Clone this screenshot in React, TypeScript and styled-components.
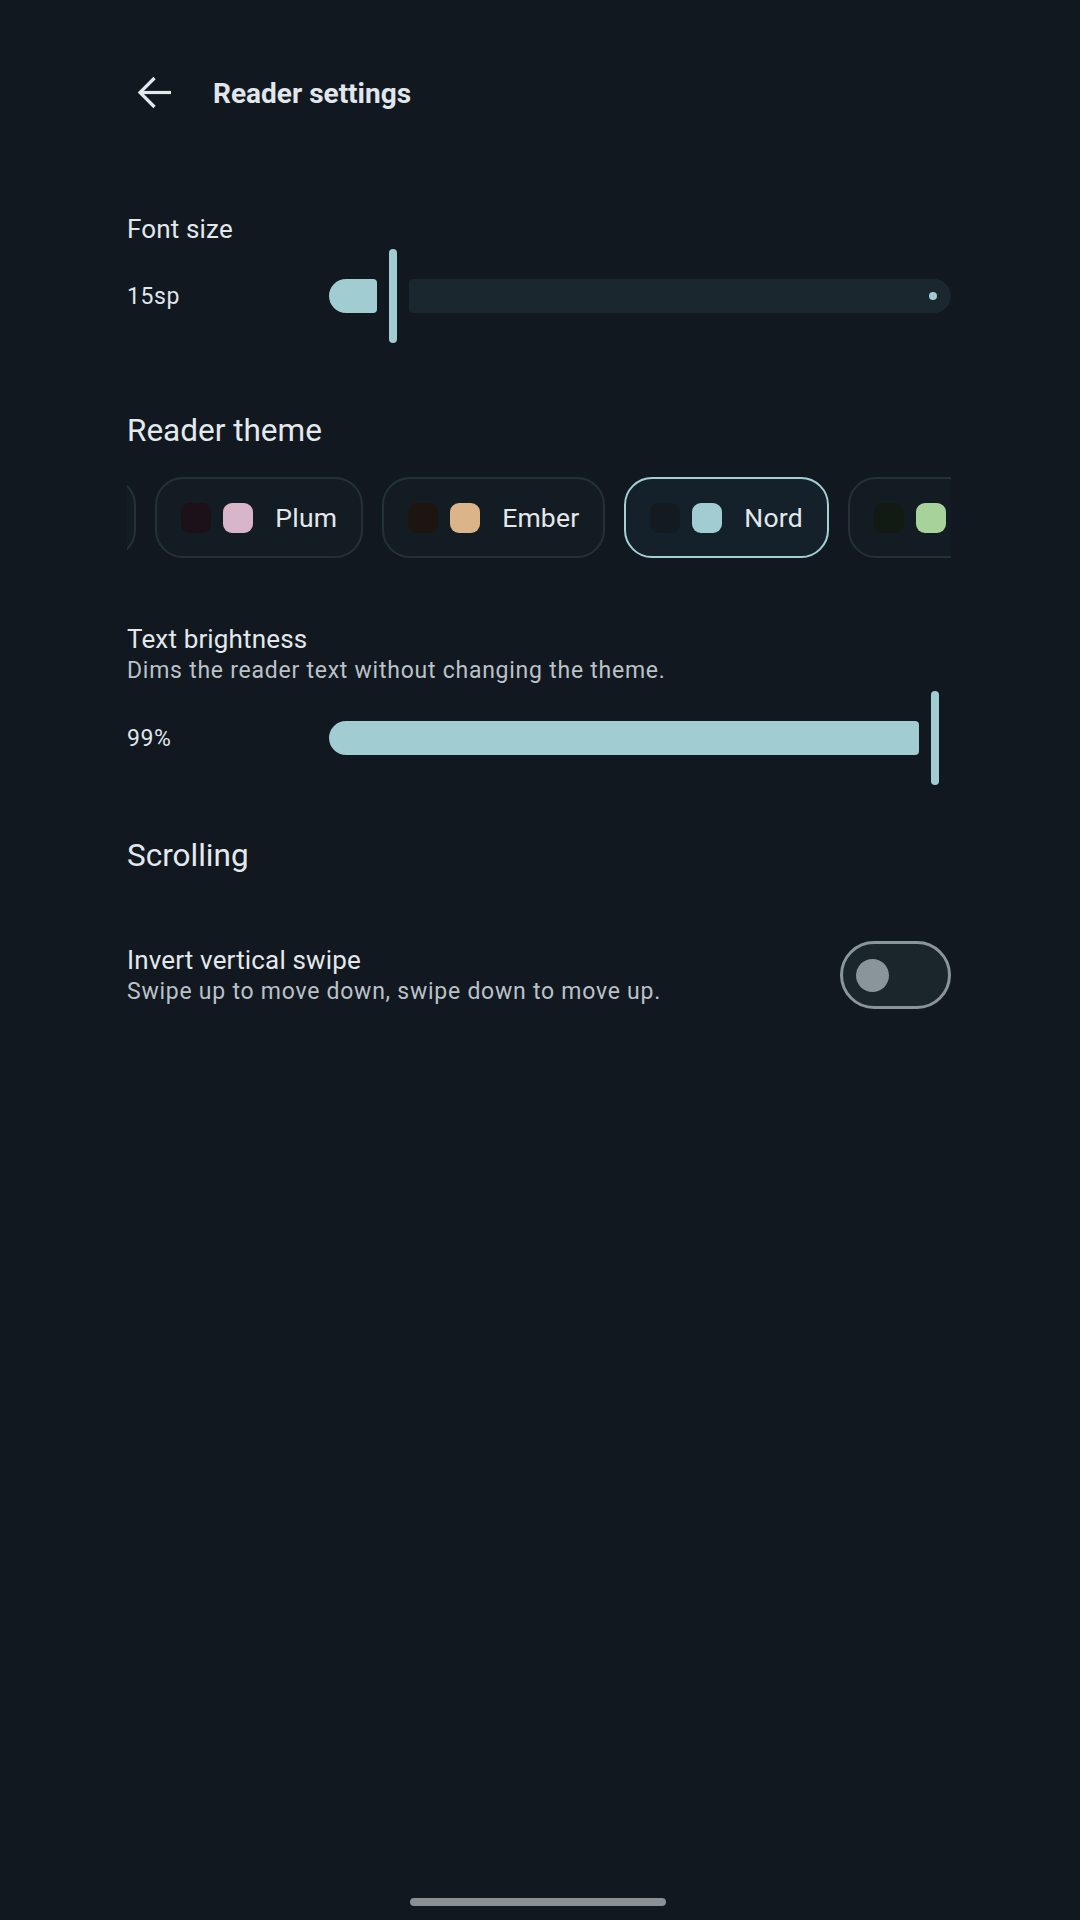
import { useLayoutEffect, useRef } from 'react'
import styled, { createGlobalStyle } from 'styled-components'

const GlobalStyle = createGlobalStyle`
  * {
    box-sizing: border-box;
  }

  html, body {
    margin: 0;
    padding: 0;
    background: #11181f;
  }

  body {
    font-family: Roboto, 'Noto Sans', sans-serif;
    color: #e1e6ea;
    -webkit-font-smoothing: antialiased;
  }
`

const Screen = styled.div`
  min-height: 1920px;
  display: flex;
  flex-direction: column;
  padding: 0 129px 0 127px;
  background: #11181f;
`

const Header = styled.header`
  height: 80px;
  margin-top: 54px;
  display: flex;
  align-items: center;
  gap: 42px;
  padding-left: 10px;
`

const BackButton = styled.button`
  width: 34px;
  height: 34px;
  margin-top: -2px;
  padding: 0;
  border: none;
  background: transparent;
  color: #e3e8ec;
  display: flex;
  align-items: center;
  justify-content: center;
`

const Title = styled.h1`
  margin: 0;
  font-size: 28px;
  font-weight: 700;
  line-height: 36px;
  color: #e0e6eb;
`

const Section = styled.section<{ $top: number }>`
  margin-top: ${p => p.$top}px;
  display: flex;
  flex-direction: column;
`

const SectionTitle = styled.h2`
  margin: 0;
  font-size: 31.5px;
  font-weight: 400;
  line-height: 38px;
  color: #e4e9ed;
`

const Label = styled.div`
  font-size: 26px;
  line-height: 32px;
  letter-spacing: 0.15px;
  color: #e3e8ec;
`

const Hint = styled.div`
  margin-top: 1px;
  font-size: 23px;
  line-height: 30px;
  letter-spacing: 0.75px;
  color: #bac2c8;
`

const SliderRow = styled.div<{ $top: number }>`
  margin-top: ${p => p.$top}px;
  height: 94px;
  display: flex;
  align-items: center;
`

const ValueText = styled.div`
  width: 202px;
  flex-shrink: 0;
  font-size: 23px;
  letter-spacing: 0.6px;
  color: #dfe5e9;
`

const Track = styled.div`
  flex: 1;
  height: 94px;
  display: flex;
  align-items: center;
  gap: 12px;
`

const ActiveTrack = styled.div`
  flex-basis: 0;
  height: 34px;
  border-radius: 17px 4px 4px 17px;
  background: #a1cdd2;
`

const Handle = styled.div`
  width: 8px;
  height: 94px;
  flex-shrink: 0;
  border-radius: 4px;
  background: #a1cdd2;
`

const InactiveTrack = styled.div`
  flex-basis: 0;
  height: 34px;
  border-radius: 4px 17px 17px 4px;
  background: #1b272e;
  display: flex;
  align-items: center;
  justify-content: flex-end;
  padding-right: 14px;
  overflow: hidden;
`

const StopDot = styled.span`
  width: 8px;
  height: 8px;
  border-radius: 50%;
  background: #a1cdd2;
`

const ChipScroller = styled.div`
  margin-top: 27px;
  overflow-x: auto;
  scrollbar-width: none;

  &::-webkit-scrollbar {
    display: none;
  }
`

const ChipRow = styled.div`
  display: flex;
  gap: 19px;
  width: max-content;
`

const Chip = styled.button<{ $selected?: boolean }>`
  height: 81px;
  display: inline-flex;
  align-items: center;
  padding: 0 24px;
  border: 2px solid ${p => (p.$selected ? '#a3d0d5' : '#25313a')};
  border-radius: 28px;
  background: ${p => (p.$selected ? '#15212a' : '#141c23')};
  font-family: inherit;
  cursor: pointer;
`

const Swatches = styled.span`
  display: flex;
  gap: 12px;
  margin-right: 22px;
`

const Swatch = styled.span<{ $color: string }>`
  width: 30px;
  height: 30px;
  border-radius: 9px;
  background: ${p => p.$color};
`

const ChipName = styled.span`
  font-size: 26.5px;
  letter-spacing: 0.2px;
  color: #e3e8eb;
`

const SwitchRow = styled.div`
  margin-top: 66px;
  display: flex;
  align-items: center;
  justify-content: space-between;
`

const SwitchTrack = styled.button`
  width: 111px;
  height: 68px;
  flex-shrink: 0;
  display: flex;
  align-items: center;
  padding: 0 0 0 13px;
  border: 3.5px solid #8a949b;
  border-radius: 34px;
  background: #1b252c;
`

const Thumb = styled.span`
  width: 33px;
  height: 33px;
  border-radius: 50%;
  background: #8a949b;
`

const HomeIndicator = styled.div`
  margin-top: auto;
  margin-bottom: 14px;
  align-self: center;
  width: 256px;
  height: 8px;
  border-radius: 4px;
  background: #8a9095;
  transform: translateX(-1px);
`

interface SliderProps {
  label: string
  value: number
  min: number
  max: number
  top: number
}

const Slider = ({ label, value, min, max, top }: SliderProps) => {
  const fraction = (value - min) / (max - min)
  // near the end the inactive part collapses away, like the Material slider does
  const full = fraction >= 0.98

  return (
    <SliderRow $top={top}>
      <ValueText>{label}</ValueText>
      <Track>
        <ActiveTrack style={{ flexGrow: full ? 1 : fraction }} />
        <Handle />
        <InactiveTrack style={{ flexGrow: full ? 0 : 1 - fraction, padding: full ? 0 : undefined }}>
          {!full && <StopDot />}
        </InactiveTrack>
      </Track>
    </SliderRow>
  )
}

const themes = [
  { name: 'Slate', dark: '#161d23', light: '#c3ccd4' },
  { name: 'Plum', dark: '#1c1118', light: '#d8b5c8' },
  { name: 'Ember', dark: '#1c1510', light: '#dbb48a' },
  { name: 'Nord', dark: '#131b20', light: '#a1cdd2' },
  { name: 'Forest', dark: '#111a13', light: '#a7d39a' },
  { name: 'Paper', dark: '#1d1b17', light: '#e6dcc6' },
]

const ThemePicker = ({ selected }: { selected: string }) => {
  const scrollerRef = useRef<HTMLDivElement>(null)

  useLayoutEffect(() => {
    const scroller = scrollerRef.current
    const first = scroller?.firstElementChild?.firstElementChild as HTMLElement | null
    if (scroller && first) scroller.scrollLeft = first.offsetWidth - 9
  }, [])

  return (
    <ChipScroller ref={scrollerRef}>
      <ChipRow>
        {themes.map(theme => (
          <Chip key={theme.name} type='button' $selected={theme.name === selected}>
            <Swatches>
              <Swatch $color={theme.dark} />
              <Swatch $color={theme.light} />
            </Swatches>
            <ChipName>{theme.name}</ChipName>
          </Chip>
        ))}
      </ChipRow>
    </ChipScroller>
  )
}

const BackArrow = () => (
  <svg width='34' height='34' viewBox='0 0 34 34' fill='none' stroke='currentColor' strokeWidth='3.2'>
    <path d='M34 16.5H3' />
    <path d='M17.5 2L3 16.5L17.5 31' strokeLinejoin='miter' />
  </svg>
)

const App = () => {
  return (
    <>
      <GlobalStyle />
      <Screen>
        <Header>
          <BackButton type='button' aria-label='Back'>
            <BackArrow />
          </BackButton>
          <Title>Reader settings</Title>
        </Header>

        <Section $top={79}>
          <Label>Font size</Label>
          <Slider label='15sp' value={15} min={12} max={48} top={4} />
        </Section>

        <Section $top={69}>
          <SectionTitle>Reader theme</SectionTitle>
          <ThemePicker selected='Nord' />
        </Section>

        <Section $top={65}>
          <Label>Text brightness</Label>
          <Hint>Dims the reader text without changing the theme.</Hint>
          <Slider label='99%' value={99} min={0} max={100} top={5} />
        </Section>

        <Section $top={52}>
          <SectionTitle>Scrolling</SectionTitle>
          <SwitchRow>
            <div>
              <Label>Invert vertical swipe</Label>
              <Hint>Swipe up to move down, swipe down to move up.</Hint>
            </div>
            <SwitchTrack type='button' role='switch' aria-checked='false'>
              <Thumb />
            </SwitchTrack>
          </SwitchRow>
        </Section>

        <HomeIndicator />
      </Screen>
    </>
  )
}

export default App
